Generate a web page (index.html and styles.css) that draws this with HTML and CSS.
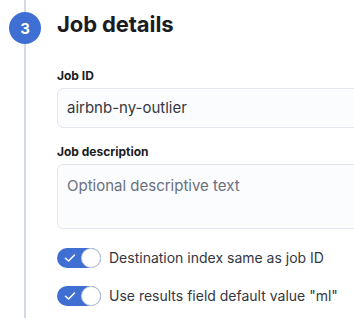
FILE: index.html
```html
<!DOCTYPE html>
<html lang="en">
<head>
<meta charset="utf-8">
<link rel="stylesheet" href="styles.css">
</head>
<body>
<div class="step">
  <div class="rail">
    <div class="line line-top"></div>
    <div class="num">3</div>
    <div class="line line-bottom"></div>
  </div>
  <div class="content">
    <h2 class="title">Job details</h2>
    <div class="field">
      <label class="label">Job ID</label>
      <div class="input">airbnb-ny-outlier</div>
    </div>
    <div class="field">
      <label class="label">Job description</label>
      <div class="textarea">Optional descriptive text</div>
    </div>
    <div class="switches">
      <div class="switch-row">
        <span class="switch">
          <svg class="check" width="12" height="10" viewBox="0 0 12 10"><path d="M1.5 5.2 L4.6 8 L10.5 2" fill="none" stroke="#fff" stroke-width="1.5" stroke-linecap="round" stroke-linejoin="round"/></svg>
          <span class="knob"></span>
        </span>
        <span class="switch-label">Destination index same as job ID</span>
      </div>
      <div class="switch-row">
        <span class="switch">
          <svg class="check" width="12" height="10" viewBox="0 0 12 10"><path d="M1.5 5.2 L4.6 8 L10.5 2" fill="none" stroke="#fff" stroke-width="1.5" stroke-linecap="round" stroke-linejoin="round"/></svg>
          <span class="knob"></span>
        </span>
        <span class="switch-label">Use results field default value "ml"</span>
      </div>
    </div>
  </div>
</div>
</body>
</html>
```

FILE: styles.css
```css
html, body {
  margin: 0;
  padding: 0;
  background: #fff;
  height: 100%;
  overflow: hidden;
}
body {
  font-family: Inter, "Noto Sans", sans-serif;
  color: #343741;
}
.step {
  display: flex;
  min-height: 318px;
}
.rail {
  width: 50px;
  flex: none;
  display: flex;
  flex-direction: column;
  align-items: center;
}
.line {
  width: 2px;
  background: #d3dae6;
}
.line-top {
  height: 12px;
}
.line-bottom {
  flex: 1;
}
.num {
  width: 32px;
  height: 32px;
  border-radius: 50%;
  background: #3f6fd3;
  color: #fff;
  font-weight: 700;
  font-size: 15px;
  display: flex;
  align-items: center;
  justify-content: center;
  flex: none;
}
.content {
  flex: 1;
  padding-left: 7px;
  min-width: 0;
  overflow: hidden;
}
.title {
  margin: 10px 0 0;
  font-size: 22px;
  line-height: 28px;
  font-weight: 700;
  color: #1a1c21;
  letter-spacing: -0.1px;
}
.field {
  display: flex;
  flex-direction: column;
  gap: 4px;
  margin-top: 16px;
}
.field:first-of-type {
  margin-top: 30px;
}
.label {
  font-size: 12px;
  line-height: 16px;
  font-weight: 700;
  color: #1a1c21;
}
.input, .textarea {
  width: 400px;
  box-sizing: border-box;
  background: #fbfcfd;
  border: 1px solid #e3e6ee;
  border-radius: 6px;
  font-size: 15px;
  padding: 0 9px;
}
.input {
  height: 40px;
  line-height: 38px;
  color: #343741;
}
.textarea {
  height: 65px;
  padding-top: 11px;
  line-height: 20px;
  color: #69707d;
}
.switches {
  display: flex;
  flex-direction: column;
  gap: 18px;
  margin-top: 19px;
}
.switch-row {
  display: flex;
  align-items: center;
  gap: 8px;
  height: 20px;
}
.switch {
  position: relative;
  width: 44px;
  height: 20px;
  border-radius: 10px;
  background: #3f6fd3;
  flex: none;
}
.check {
  position: absolute;
  left: 7px;
  top: 5px;
}
.knob {
  position: absolute;
  right: 0;
  top: 0;
  width: 20px;
  height: 20px;
  box-sizing: border-box;
  border-radius: 50%;
  background: #fff;
  border: 1px solid #c3cad6;
}
.switch-label {
  font-size: 14px;
  line-height: 20px;
  color: #343741;
}
```
